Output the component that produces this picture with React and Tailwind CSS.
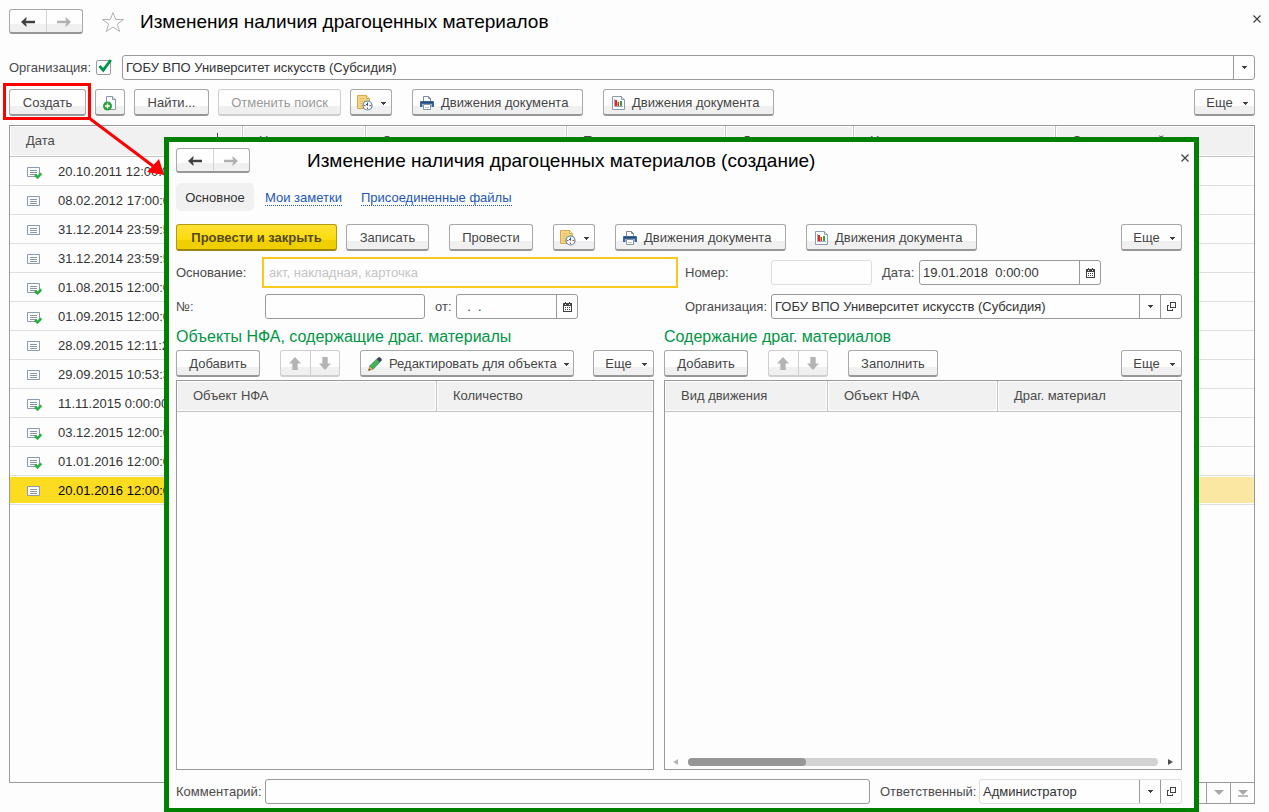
import { useState } from 'react'
import clsx from 'clsx'

const rows = [
  { date: '20.10.2011 12:00:00', posted: true },
  { date: '08.02.2012 17:00:00', posted: false },
  { date: '31.12.2014 23:59:59', posted: false },
  { date: '31.12.2014 23:59:59', posted: false },
  { date: '01.08.2015 12:00:00', posted: true },
  { date: '01.09.2015 12:00:00', posted: true },
  { date: '28.09.2015 12:11:23', posted: false },
  { date: '29.09.2015 10:53:32', posted: false },
  { date: '11.11.2015 0:00:00', posted: true },
  { date: '03.12.2015 12:00:00', posted: true },
  { date: '01.01.2016 12:00:00', posted: true },
  { date: '20.01.2016 12:00:00', posted: false },
]

const listColumns = ['Номер', 'Организация', 'Подразделение', 'Документ', 'Номер док.', 'Ответственный']

const pagers = [
  { label: 'В начало', up: true, edge: true },
  { label: 'Назад', up: true },
  { label: 'Вперед' },
  { label: 'В конец', edge: true },
]

/* ---------- icons ---------- */

function Caret({ className }) {
  return (
    <svg viewBox="0 0 5 3" className={clsx('h-[3px] w-[5px] shrink-0', className)} shapeRendering="crispEdges">
      <path d="M0 0h5v1H4v1H3v1H2V2H1V1H0z" fill="#404040" />
    </svg>
  )
}

function ArrowIcon({ right, color }) {
  return (
    <svg viewBox="0 0 14 10" className={clsx('h-[10px] w-[14px]', right && 'rotate-180')}>
      <path d="M0 5 5.500 0v2.200L4.600 3.800H14v2.400H4.600l.9 1.600V10z" fill={color} />
    </svg>
  )
}

function MoveIcon({ down }) {
  return (
    <svg viewBox="0 0 12 13" className={clsx('h-[13px] w-[12px]', down && 'rotate-180')}>
      <path d="M6 0l6 6.500H8.700V13H3.300V6.500H0z" fill="#b4b4b4" />
    </svg>
  )
}

function CloseIcon() {
  return (
    <svg viewBox="0 0 8 8" className="size-2">
      <path d="M.5.5l7 7M7.500.5l-7 7" stroke="#404040" strokeWidth="1.200" />
    </svg>
  )
}

function StarIcon() {
  return (
    <svg viewBox="0 0 24 22" className="h-[22px] w-6">
      <path d="M12 1.500l2.700 7h7.900l-6.300 4.600 2.400 7.400L12 16l-6.700 4.500 2.400-7.400L1.400 8.500h7.900z" fill="#fff" stroke="#b0b0b0" />
    </svg>
  )
}

function CopyIcon() {
  return (
    <svg viewBox="0 0 14 16" className="h-4 w-[14px]">
      <path d="M3.500 1.500h6l3 3v10h-9z" fill="#fff" stroke="#8496a8" />
      <path d="M9.500 1.500v3h3" fill="#dfe6ec" stroke="#8496a8" />
      <circle cx="4.500" cy="11" r="4.500" fill="#27a03c" />
      <path d="M4.500 8.500v5M2 11h5" stroke="#fff" strokeWidth="1.400" />
    </svg>
  )
}

function ReminderIcon() {
  return (
    <svg viewBox="0 0 16 16" className="size-4">
      <path d="M.5.5h9l3 3v10H.5z" fill="#f7d581" stroke="#d3aa52" />
      <path d="M9.500.5v3h3" fill="#fff0c4" stroke="#d3aa52" />
      <path d="M2.500 3.500h5M2.500 6h5M2.500 8.500h3M2.500 11h3" stroke="#e3bd6a" />
      <circle cx="10.500" cy="10.500" r="4.500" fill="#f4f9fd" stroke="#5b87ad" strokeWidth="1.200" />
      <path d="M10.500 7.500v3l-1.500-1.500" fill="none" stroke="#2a5580" />
      <path d="M10.500 14v-1.500M7 10.500h1.500M14 10.500h-1.500" stroke="#d43a2a" />
    </svg>
  )
}

function PrinterIcon() {
  return (
    <svg viewBox="0 0 14 14" className="size-[14px]">
      <path d="M3.500 6V.5h5l2 2V6" fill="#fff" stroke="#7b8b9b" />
      <path d="M8.500.5v2h2" fill="none" stroke="#7b8b9b" />
      <path d="M1 5h12a1 1 0 011 1v5h-2.500V8h-9v3H0V6a1 1 0 011-1z" fill="#3a6796" />
      <path d="M1 6.500h12" stroke="#254c78" />
      <path d="M3.500 8.500h7v5h-7z" fill="#fff" stroke="#8494a3" />
      <path d="M5 11.500h4" stroke="#b8c3cd" />
    </svg>
  )
}

function ReportIcon() {
  return (
    <svg viewBox="0 0 13 14" className="h-[14px] w-[13px]">
      <path d="M.5.5h9l3 3v10H.5z" fill="#fff" stroke="#8b9bab" />
      <path d="M9.500.5v3h3" fill="#e3e9ee" stroke="#8b9bab" />
      <path d="M2.500 3v7.500H11" fill="none" stroke="#9aa8b5" />
      <path d="M3 4h2v6H3z" fill="#e52b20" />
      <path d="M5.500 6h1.500v4H5.500z" fill="#e52b20" />
      <path d="M8 5h2v5H8z" fill="#2ca63c" />
    </svg>
  )
}

function PencilIcon() {
  return (
    <svg viewBox="0 0 14 14" className="size-[14px]">
      <path d="M.5 13.500l1.400-4.700 3.300 3.300z" fill="#f0b267" stroke="#9b6a33" strokeWidth=".6" />
      <path d="M.5 13.500l.6-2 1.400 1.400z" fill="#3a3a3a" />
      <path d="M1.900 8.800L8.700 2 12 5.300l-6.800 6.800z" fill="#43b05c" stroke="#2a7a3f" strokeWidth=".6" />
      <path d="M8.700 2l1.600-1.600q1-.7 2 .2l1.100 1.100q.8 1 .1 2L12 5.300z" fill="#3d3f66" />
    </svg>
  )
}

function CalendarIcon() {
  return (
    <svg viewBox="0 0 9 10" className="h-[10px] w-[9px]" shapeRendering="crispEdges">
      <path d="M0 1h9v9H0zM1 4v5h7V4z" fill="#404040" fillRule="evenodd" />
      <path d="M2 0h1v2H2zM6 0h1v2H6zM2 5h1v1H2zM4 5h1v1H4zM6 5h1v1H6zM2 7h1v1H2zM4 7h1v1H4zM6 7h1v1H6z" fill="#404040" />
      <path d="M2 2h1v1H2zM6 2h1v1H6z" fill="#fff" />
    </svg>
  )
}

function OpenIcon() {
  return (
    <svg viewBox="0 0 9 9" className="size-[9px]" shapeRendering="crispEdges">
      <path d="M3.500.5h5v5h-5z" fill="none" stroke="#404040" />
      <path d="M2 3.500H.5v5h5V7" fill="none" stroke="#404040" />
    </svg>
  )
}

function RowIcon({ posted }) {
  return (
    <svg viewBox="0 0 16 13" className="h-[13px] w-4">
      <path d="M1.500 1.500h12v9h-12z" fill="#fdfdfd" stroke="#8a9bab" />
      <path d="M4 4.500h7M4 6.500h7M4 8.500h7" stroke="#8a96a2" />
      {posted && (
        <path d="M9 9l2.500 2.300 3.800-4" fill="none" stroke="#27b042" strokeWidth="2.600" />
      )}
    </svg>
  )
}

/* ---------- controls ---------- */

function Button({ className, disabled, children, ...rest }) {
  return (
    <button
      type="button"
      disabled={disabled}
      className={clsx(
        'flex h-[27px] shrink-0 items-center rounded-[3px] border border-b-2 bg-linear-to-b from-[#fefefe] from-65% to-[#f0f0f0] to-65% pt-[2px]',
        disabled ? 'border-[#cfcfcf] text-[#999999]' : 'border-[#a8a8a8] border-b-[#979797] text-[#444444]',
        className,
      )}
      {...rest}
    >
      {children}
    </button>
  )
}

function MoreButton() {
  return (
    <Button className="ml-auto w-[61px] justify-center gap-[10px] pl-[5px]">
      Еще
      <Caret />
    </Button>
  )
}

function DocumentButtons() {
  return (
    <>
      <Button className="w-[42px] justify-center gap-2" aria-label="Напоминание">
        <ReminderIcon />
        <Caret />
      </Button>
      <Button className="ml-5 w-[171px] gap-[7px] pl-[7px]">
        <PrinterIcon />
        Движения документа
      </Button>
      <Button className="ml-5 w-[171px] gap-[7px] pl-2">
        <ReportIcon />
        Движения документа
      </Button>
    </>
  )
}

function HistoryButtons() {
  return (
    <div className="flex h-[25px] w-[74px] shrink-0 rounded-[3px] border border-b-2 border-[#a8a8a8] border-b-[#979797] bg-linear-to-b from-[#fefefe] from-65% to-[#f0f0f0] to-65%">
      <button type="button" aria-label="Назад" className="flex flex-1 items-center justify-center border-r border-[#d4d4d4] pt-px">
        <ArrowIcon color="#404040" />
      </button>
      <button type="button" aria-label="Вперед" className="flex flex-1 items-center justify-center pt-px">
        <ArrowIcon right color="#b0b0b0" />
      </button>
    </div>
  )
}

function MoveButtons() {
  return (
    <div className="ml-5 flex h-[27px] w-[60px] shrink-0 rounded-[3px] border border-b-2 border-[#cfcfcf] bg-linear-to-b from-[#fefefe] from-65% to-[#f0f0f0] to-65%">
      <button type="button" disabled aria-label="Вверх" className="flex flex-1 items-center justify-center border-r border-[#cfcfcf]">
        <MoveIcon />
      </button>
      <button type="button" disabled aria-label="Вниз" className="flex flex-1 items-center justify-center">
        <MoveIcon down />
      </button>
    </div>
  )
}

function Field({ id, className, pale, children, ...rest }) {
  return (
    <div className={clsx('flex h-[25px] rounded-[3px] border bg-[#fefefe]', pale ? 'border-[#dddddd]' : 'border-[#999999]', className)}>
      <input id={id} className="w-full min-w-0 flex-1 px-[3px] text-[#333333] outline-none" {...rest} />
      {children}
    </div>
  )
}

function SelectField({ id, value, pale, open, className }) {
  return (
    <div className={clsx('flex h-[25px] min-w-0 rounded-[3px] border bg-[#fefefe]', pale ? 'border-[#dddddd]' : 'border-[#999999]', className)}>
      <div className="relative flex min-w-0 flex-1">
        <select id={id} className="w-full appearance-none px-[3px] text-[#333333] outline-none">
          <option>{value}</option>
        </select>
        <span className="pointer-events-none absolute inset-y-0 right-0 flex w-[21px] items-center justify-center border-l border-[#999999]">
          <Caret />
        </span>
      </div>
      {open && (
        <button type="button" aria-label="Открыть" className="flex w-[21px] items-center justify-center border-l border-[#999999]">
          <OpenIcon />
        </button>
      )}
    </div>
  )
}

function CalendarButton() {
  return (
    <button type="button" aria-label="Календарь" className="flex w-[21px] shrink-0 items-center justify-center border-l border-[#999999]">
      <CalendarIcon />
    </button>
  )
}

function HeadCell({ children }) {
  return (
    <th className="h-[31px] overflow-hidden border-r border-b border-[#c4c4c4] bg-[#f1f1f1] px-4 text-left font-normal whitespace-nowrap shadow-[inset_0_0_0_1px_#fefefe] last:border-r-0">
      {children}
    </th>
  )
}

/* ---------- list ---------- */

function DocumentList() {
  const [selected, setSelected] = useState(11)

  return (
    <div className="flex-1 border border-[#999999]">
      <table className="w-full table-fixed border-separate border-spacing-0">
        <colgroup>
          <col className="w-[233px]" />
          <col className="w-[123px]" />
          <col className="w-[201px]" />
          <col className="w-[159px]" />
          <col className="w-[128px]" />
          <col className="w-[202px]" />
          <col />
        </colgroup>
        <thead>
          <tr>
            <HeadCell>
              <span className="flex justify-between pr-[5px]">
                Дата
                <svg viewBox="0 0 7 11" className="h-[11px] w-[7px]">
                  <path d="M3.500 0v10M.5 7l3 3 3-3" fill="none" stroke="#444444" />
                </svg>
              </span>
            </HeadCell>
            {listColumns.map((name) => (
              <HeadCell key={name}>{name}</HeadCell>
            ))}
          </tr>
        </thead>
        <tbody>
          {rows.map((row, i) => (
            <tr key={i} onClick={() => setSelected(i)}>
              <td
                className={clsx(
                  'h-[29px] border-b border-[#dedede] pt-[2px] pl-4 whitespace-nowrap shadow-[inset_0_1px_0_#fefefe,inset_0_-1px_0_#fefefe]',
                  i === selected ? 'bg-[#fbdc20] text-black' : 'text-[#333333]',
                )}
              >
                <span className="flex items-center gap-4">
                  <RowIcon posted={row.posted} />
                  {row.date}
                </span>
              </td>
              <td
                colSpan={6}
                className={clsx(
                  'border-b border-[#dedede] shadow-[inset_0_1px_0_#fefefe,inset_0_-1px_0_#fefefe]',
                  i === selected && 'bg-[#fbe6a2]',
                )}
              />
            </tr>
          ))}
        </tbody>
      </table>
    </div>
  )
}

function ListFooter() {
  return (
    <div className="flex h-[21px] justify-end">
      {pagers.map(({ label, up, edge }) => (
        <button
          key={label}
          type="button"
          aria-label={label}
          className="flex w-6 items-center justify-center border-r border-b border-[#999999] first:w-[25px] first:border-l"
        >
          <svg viewBox="0 0 10 7" className={clsx('h-[7px] w-[10px]', up && 'rotate-180')}>
            <path d="M0 0h10L5 5z" fill="#a8a8a8" />
            {edge && <path d="M0 6h10" stroke="#a8a8a8" strokeWidth="1.500" />}
          </svg>
        </button>
      ))}
    </div>
  )
}

/* ---------- document form ---------- */

function ObjectsPanel() {
  return (
    <section className="flex flex-col">
      <h2 className="text-base leading-5 text-[#009646]">Объекты НФА, содержащие драг. материалы</h2>
      <div className="mt-[3px] flex">
        <Button className="w-[84px] justify-center">Добавить</Button>
        <MoveButtons />
        <Button className="ml-5 w-[214px] gap-[7px] pl-[7px]">
          <PencilIcon />
          Редактировать для объекта
          <Caret />
        </Button>
        <MoreButton />
      </div>
      <div className="mt-[3px] flex-1 border border-[#999999]">
        <table className="w-full table-fixed border-separate border-spacing-0">
          <colgroup>
            <col className="w-[260px]" />
            <col />
          </colgroup>
          <thead>
            <tr>
              <HeadCell>Объект НФА</HeadCell>
              <HeadCell>Количество</HeadCell>
            </tr>
          </thead>
        </table>
      </div>
    </section>
  )
}

function ContentsPanel() {
  return (
    <section className="flex flex-col">
      <h2 className="text-base leading-5 text-[#009646]">Содержание драг. материалов</h2>
      <div className="mt-[3px] flex">
        <Button className="w-[84px] justify-center">Добавить</Button>
        <MoveButtons />
        <Button className="ml-5 w-[90px] justify-center">Заполнить</Button>
        <MoreButton />
      </div>
      <div className="mt-[3px] flex flex-1 flex-col justify-between border border-[#999999]">
        <table className="w-full table-fixed border-separate border-spacing-0">
          <colgroup>
            <col className="w-[163px]" />
            <col className="w-[170px]" />
            <col />
          </colgroup>
          <thead>
            <tr>
              <HeadCell>Вид движения</HeadCell>
              <HeadCell>Объект НФА</HeadCell>
              <HeadCell>Драг. материал</HeadCell>
            </tr>
          </thead>
        </table>
        {/* Horizontal scrollbar */}
        <div className="flex items-center gap-[10px] px-2 pb-[3px]">
          <svg viewBox="0 0 5 6" className="h-[6px] w-[5px]">
            <path d="M5 0v6L0 3z" fill="#b4b4b4" />
          </svg>
          <div className="h-2 flex-1 rounded-full bg-[#d2d2d2]">
            <div className="h-2 w-1/4 rounded-full bg-[#969696]" />
          </div>
          <svg viewBox="0 0 5 6" className="h-[6px] w-[5px]">
            <path d="M0 0v6l5-3z" fill="#505050" />
          </svg>
        </div>
      </div>
    </section>
  )
}

function DocumentForm() {
  return (
    <div className="absolute top-[137px] right-[70px] bottom-0 left-[164px] flex flex-col border-[5px] border-b-4 border-[#008000] bg-[#fdfdfd] pt-[6px] pr-3 pb-1 pl-[7px]">
      <header className="flex items-center">
        <HistoryButtons />
        <h1 className="ml-[57px] text-[19px] leading-6 text-black">Изменение наличия драгоценных материалов (создание)</h1>
      </header>
      <button type="button" aria-label="Закрыть" className="absolute top-3 right-[5px]">
        <CloseIcon />
      </button>

      <nav className="mt-[10px] flex items-center">
        <span className="flex h-7 w-[78px] items-center justify-center rounded-[5px] bg-[#f1f1f1] pt-[2px] text-[#333333]">Основное</span>
        <a href="#notes" className="ml-[11px] border-b border-dotted border-[#2456b4] pt-[2px] leading-[14px] text-[#2456b4]">Мои заметки</a>
        <a href="#files" className="ml-[19px] border-b border-dotted border-[#2456b4] pt-[2px] leading-[14px] text-[#2456b4]">Присоединенные файлы</a>
      </nav>

      <div className="mt-[13px] flex">
        <button
          type="button"
          className="mr-[9px] h-[27px] w-[161px] rounded-[3px] border border-b-2 border-[#b09a18] border-b-[#998510] bg-linear-to-b from-[#ffe030] via-[#fcdc08] via-60% to-[#f0cf00] to-65% pt-[2px] font-bold text-[#54491a]"
        >
          Провести и закрыть
        </button>
        <Button className="mr-5 w-[83px] justify-center">Записать</Button>
        <Button className="mr-5 w-[84px] justify-center">Провести</Button>
        <DocumentButtons />
        <MoreButton />
      </div>

      <div className="mt-[6px] grid grid-cols-[502fr_497fr] items-center gap-x-[7px] gap-y-[6px]">
        <div className="flex items-center">
          <label htmlFor="basis" className="w-[86px] shrink-0">Основание:</label>
          <input
            id="basis"
            placeholder="акт, накладная, карточка"
            className="h-[31px] min-w-0 flex-1 border-2 border-[#fac91e] bg-[#fefefe] px-[5px] outline-none placeholder:text-[#c4c4c4]"
          />
        </div>
        <div className="flex items-center">
          <label htmlFor="number" className="w-[86px] shrink-0">Номер:</label>
          <Field id="number" pale className="w-[101px]" />
          <label htmlFor="date" className="ml-[10px] w-[37px] shrink-0">Дата:</label>
          <Field id="date" defaultValue="19.01.2018  0:00:00" className="w-[182px]">
            <CalendarButton />
          </Field>
        </div>
        <div className="flex items-center">
          <label htmlFor="no" className="w-[89px] shrink-0">№:</label>
          <Field id="no" className="w-[160px]" />
          <label htmlFor="from" className="ml-[10px] w-[21px] shrink-0">от:</label>
          <Field id="from" defaultValue="  .  ." className="w-[122px]">
            <CalendarButton />
          </Field>
        </div>
        <div className="flex items-center">
          <label htmlFor="formOrg" className="w-[86px] shrink-0">Организация:</label>
          <SelectField id="formOrg" value="ГОБУ ВПО Университет искусств (Субсидия)" open className="flex-1" />
        </div>
      </div>

      <div className="mt-2 grid flex-1 grid-cols-[478fr_518fr] gap-[10px]">
        <ObjectsPanel />
        <ContentsPanel />
      </div>

      <footer className="mt-[9px] flex items-center">
        <label htmlFor="comment" className="w-[89px] shrink-0">Комментарий:</label>
        <Field id="comment" className="flex-1" />
        <label htmlFor="owner" className="ml-[10px] w-[99px] shrink-0">Ответственный:</label>
        <SelectField id="owner" value="Администратор" pale open className="w-[203px]" />
      </footer>
    </div>
  )
}

export default function App() {
  const [filter, setFilter] = useState(true)

  return (
    <div className="relative flex min-h-screen flex-col overflow-hidden bg-[#fdfdfd] pt-[9px] pr-[14px] pb-2 pl-[9px] font-['Liberation_Sans',Arial,sans-serif] text-[13px] leading-4 text-[#4a4a4a]">
      <header className="flex h-[25px] items-center">
        <HistoryButtons />
        <button type="button" aria-label="В избранное" className="ml-[18px]">
          <StarIcon />
        </button>
        <h1 className="ml-[15px] text-[19px] leading-6 text-black">Изменения наличия драгоценных материалов</h1>
      </header>
      <button type="button" aria-label="Закрыть" className="absolute top-[15px] right-2">
        <CloseIcon />
      </button>

      <div className="mt-[21px] flex items-center">
        <label htmlFor="useOrg" className="w-[87px] shrink-0">Организация:</label>
        <span className="relative mr-[11px] flex shrink-0">
          <input
            id="useOrg"
            type="checkbox"
            checked={filter}
            onChange={(e) => setFilter(e.target.checked)}
            className="peer size-[15px] appearance-none rounded-[2px] border border-[#999999] bg-white"
          />
          <svg viewBox="0 0 16 16" className="pointer-events-none absolute bottom-px left-px hidden size-4 peer-checked:block">
            <path d="M2.500 8l3.700 4.200L13.800 2" fill="none" stroke="#009646" strokeWidth="2.800" />
          </svg>
        </span>
        <SelectField id="listOrg" value="ГОБУ ВПО Университет искусств (Субсидия)" className="flex-1" />
      </div>

      <div className="mt-[9px] flex">
        <div className="relative mr-[9px]">
          <Button className="w-[77px] justify-center">Создать</Button>
          {/* Callout: frame and arrow that lead to the opened form */}
          <span className="pointer-events-none absolute -top-[6px] -right-[5px] -bottom-[4px] -left-[6px] border-[3px] border-[#fe0000]" />
          <svg viewBox="0 0 80 62" className="pointer-events-none absolute top-[27px] left-[78px] z-10 h-[62px] w-20">
            <path d="M2 2l64 48" stroke="#fe0000" strokeWidth="3" />
            <path d="M77 59l-17-3 12-13z" fill="#fe0000" />
          </svg>
        </div>
        <Button className="mr-[9px] w-[30px] justify-center" aria-label="Скопировать">
          <CopyIcon />
        </Button>
        <Button className="mr-[9px] w-[75px] justify-center">Найти...</Button>
        <Button className="mr-[9px] w-[123px] justify-center" disabled>Отменить поиск</Button>
        <DocumentButtons />
        <MoreButton />
      </div>

      <div className="mt-[9px] flex flex-1 flex-col">
        <DocumentList />
        <ListFooter />
      </div>

      <DocumentForm />
    </div>
  )
}
